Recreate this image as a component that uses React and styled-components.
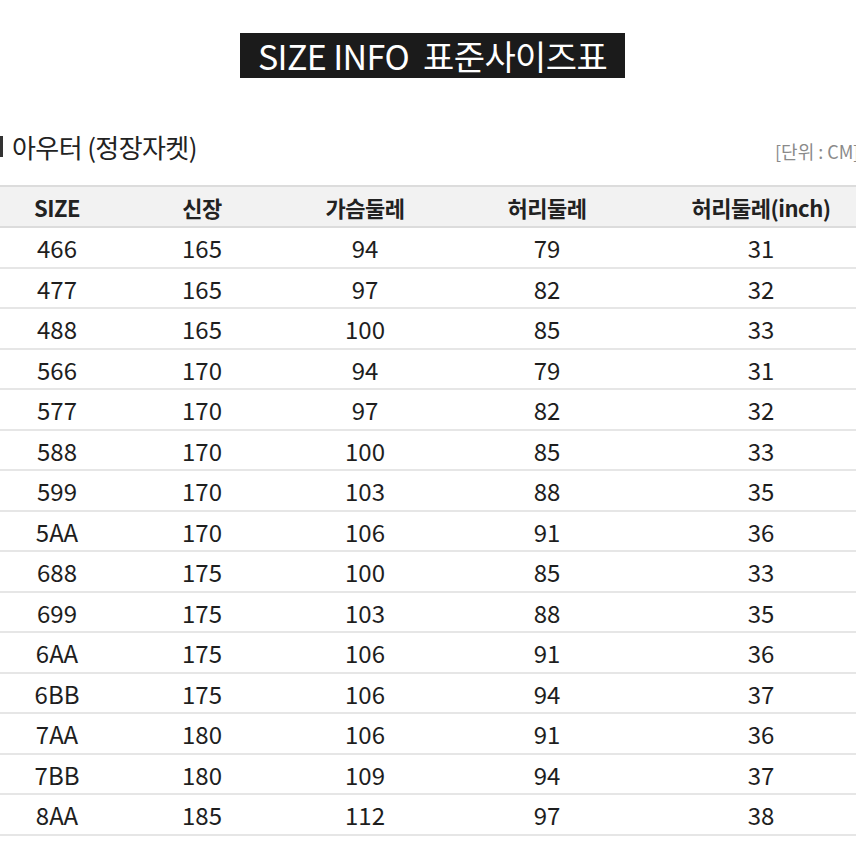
import React from "react";
import styled, { createGlobalStyle } from "styled-components";

const Global = createGlobalStyle`
  html, body { margin: 0; padding: 0; background: #fff; }
  body { overflow: hidden; width: 856px; height: 856px; font-family: "Noto Sans CJK KR", "Noto Sans", sans-serif; color: #222; }
  * { box-sizing: border-box; }
`;

const Page = styled.div`
  width: 856px;
  height: 856px;
  overflow: hidden;
  display: flex;
  flex-direction: column;
  padding-top: 33px;
`;

const TitleWrap = styled.div`
  display: flex;
  justify-content: center;
  padding-left: 9px;
`;

const Title = styled.h1`
  margin: 0;
  background: #1b1b1b;
  color: #fff;
  width: 385px;
  height: 45px;
  display: flex;
  align-items: center;
  justify-content: center;
  font-size: 34px;
  font-weight: 400;
  letter-spacing: -0.6px;
  white-space: pre;
`;

const SubRow = styled.div`
  display: flex;
  justify-content: space-between;
  align-items: center;
  margin-top: 52px;
  height: 36px;
`;

const Subtitle = styled.div`
  display: flex;
  align-items: center;
  gap: 9px;
  font-size: 26px;
  font-weight: 400;
  color: #222;
  letter-spacing: -0.6px;
  margin-top: -4px;
`;

const Bar = styled.span`
  display: inline-block;
  width: 3px;
  height: 21px;
  background: #333;
`;

const Unit = styled.div`
  font-size: 18px;
  color: #8a8a8a;
  padding-top: 6px;
  white-space: nowrap;
  width: 81px;
  overflow: hidden;
`;

const Table = styled.div`
  margin-top: 19px;
  width: 868px;
  display: grid;
  grid-template-columns: 114px 176px 150px 214px 214px;
`;

const HeadCell = styled.div`
  height: 43px;
  background: #f2f2f2;
  border-top: 2px solid #dcdcdc;
  border-bottom: 2px solid #dcdcdc;
  display: flex;
  align-items: center;
  justify-content: center;
  font-size: 22px;
  font-weight: 700;
  color: #222;
  letter-spacing: -0.5px;
`;

const Cell = styled.div`
  height: 40.5px;
  border-bottom: 2px solid #e6e6e6;
  display: flex;
  align-items: center;
  justify-content: center;
  font-size: 24px;
  font-weight: 400;
  color: #1e1e1e;
  padding-top: 1px;
`;

const headers = ["SIZE", "신장", "가슴둘레", "허리둘레", "허리둘레(inch)"];
const rows = [
  ["466", 165, 94, 79, 31],
  ["477", 165, 97, 82, 32],
  ["488", 165, 100, 85, 33],
  ["566", 170, 94, 79, 31],
  ["577", 170, 97, 82, 32],
  ["588", 170, 100, 85, 33],
  ["599", 170, 103, 88, 35],
  ["5AA", 170, 106, 91, 36],
  ["688", 175, 100, 85, 33],
  ["699", 175, 103, 88, 35],
  ["6AA", 175, 106, 91, 36],
  ["6BB", 175, 106, 94, 37],
  ["7AA", 180, 106, 91, 36],
  ["7BB", 180, 109, 94, 37],
  ["8AA", 185, 112, 97, 38],
];

export default function App() {
  return (
    <>
      <Global />
      <Page>
        <TitleWrap>
          <Title>{"SIZE INFO  표준사이즈표"}</Title>
        </TitleWrap>
        <SubRow>
          <Subtitle>
            <Bar />
            아우터 (정장자켓)
          </Subtitle>
          <Unit>[단위 : CM]</Unit>
        </SubRow>
        <Table>
          {headers.map((h) => (
            <HeadCell key={h}>{h}</HeadCell>
          ))}
          {rows.map((r) =>
            r.map((v, i) => <Cell key={r[0] + i}>{v}</Cell>)
          )}
        </Table>
      </Page>
    </>
  );
}
